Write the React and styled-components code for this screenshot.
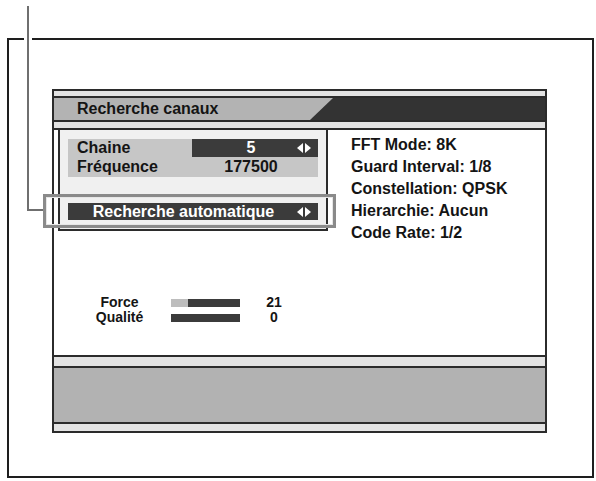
import React from 'react'
import styled, { createGlobalStyle } from 'styled-components'

const GlobalStyle = createGlobalStyle`
    html, body {
        margin: 0;
        padding: 0;
        background: #ffffff;
    }
    body {
        width: 596px;
        height: 481px;
        overflow: hidden;
        font-family: "Liberation Sans", Arial, Helvetica, sans-serif;
        font-weight: bold;
        color: #141414;
    }
`

const Page = styled.div`
    position: relative;
    width: 596px;
    height: 481px;
    padding-top: 38px;
    padding-left: 7px;
    box-sizing: border-box;
`

const Frame = styled.div`
    width: 587px;
    height: 440px;
    box-sizing: border-box;
    border: 2px solid #1e1e1e;
    padding: 49px 0 0 43px;
`

const Panel = styled.div`
    width: 495px;
    height: 344px;
    box-sizing: border-box;
    border: 2px solid #2b2b2b;
    display: flex;
    flex-direction: column;
`

const Strip = styled.div`
    height: ${p => p.h}px;
    flex: none;
    background: ${p => p.bg || '#e3e3e3'};
    border-top: ${p => (p.lineTop ? '2px solid #2b2b2b' : 'none')};
    border-bottom: ${p => (p.line ? '2px solid #2b2b2b' : 'none')};
`

const TitleBar = styled.div`
    height: 22px;
    flex: none;
    display: flex;
    align-items: center;
    background: #b3b3b3;
    border-bottom: 2px solid #2b2b2b;
`

const Title = styled.span`
    padding-left: 23px;
    font-size: 16px;
    line-height: 22px;
`

const DarkTab = styled.div`
    margin-left: auto;
    width: 235px;
    height: 100%;
    background: #333333;
    clip-path: polygon(23px 0, 100% 0, 100% 100%, 0 100%);
`

const Content = styled.div`
    flex: 1;
    background: #ffffff;
`

const Upper = styled.div`
    display: grid;
    grid-template-columns: 270px 1fr;
    align-items: start;
    margin-left: 4px;
`

const LeftBox = styled.div`
    box-sizing: border-box;
    border: 2px solid #2b2b2b;
    border-top: none;
    background: #f0f0f0;
    padding: 9px 8px;
    display: flex;
    flex-direction: column;
`

const Row = styled.div`
    height: ${p => p.h}px;
    display: grid;
    grid-template-columns: 124px 1fr;
    background: #c6c6c6;
    font-size: 16px;
    line-height: ${p => p.h}px;
`

const Label = styled.span`
    padding-left: 9px;
`

const Value = styled.div`
    display: grid;
    grid-template-columns: 1fr 16px;
    align-items: center;
    padding: 0 6px 0 14px;
    background: ${p => (p.active ? '#3b3b3b' : 'transparent')};
    color: ${p => (p.active ? '#ffffff' : '#141414')};
    text-align: center;
`

const AutoWrap = styled.div`
    position: relative;
    margin-top: 26px;
`

const AutoBar = styled.div`
    height: 17px;
    display: grid;
    grid-template-columns: 1fr 16px;
    align-items: center;
    padding: 0 6px 0 3px;
    background: #3b3b3b;
    color: #ffffff;
    font-size: 16px;
    line-height: 17px;
    text-align: center;
`

const Highlight = styled.div`
    position: absolute;
    left: -25px;
    right: -18px;
    top: -9px;
    bottom: -8px;
    border: 3px solid #8a8a8a;
    box-shadow: inset 0 0 0 1px #e6e6e6;
    pointer-events: none;
`

const LeaderDown = styled.div`
    position: absolute;
    left: -41px;
    top: -197px;
    width: 2px;
    height: 205px;
    background: #6f6f6f;
    box-shadow: 0 0 0 3px #ffffff;
`

const LeaderAcross = styled.div`
    position: absolute;
    left: -41px;
    top: 6px;
    width: 16px;
    height: 2px;
    background: #6f6f6f;
`

const Info = styled.div`
    padding: 4px 0 0 23px;
    font-size: 16px;
    line-height: 22px;
`

const Signal = styled.div`
    display: grid;
    grid-template-columns: 75px 69px 40px;
    column-gap: 14px;
    grid-auto-rows: 15px;
    align-items: center;
    margin: 51px 0 0 28px;
    font-size: 14px;
    line-height: 15px;
`

const SignalLabel = styled.span`
    text-align: center;
`

const SignalNum = styled.span`
    text-align: center;
`

const Bar = styled.div`
    height: 8px;
    background: #3b3b3b;
    display: flex;
`

const BarFill = styled.div`
    height: 100%;
    background: #bdbdbd;
`

function Arrows() {
    return (
        <svg width="16" height="10" viewBox="0 0 16 10">
            <polygon points="7,0 7,10 1,5" fill="#ffffff" />
            <polygon points="9,0 15,5 9,10" fill="#ffffff" />
        </svg>
    )
}

const info = [
    'FFT Mode: 8K',
    'Guard Interval: 1/8',
    'Constellation: QPSK',
    'Hierarchie: Aucun',
    'Code Rate: 1/2'
]

const signal = [
    { label: 'Force', value: 21, fill: 25 },
    { label: 'Qualité', value: 0, fill: 0 }
]

function App() {
    return (
        <Page>
            <GlobalStyle />
            <Frame>
                <Panel>
                    <Strip h={5} line />
                    <TitleBar>
                        <Title>Recherche canaux</Title>
                        <DarkTab />
                    </TitleBar>
                    <Strip h={6} line />
                    <Content>
                        <Upper>
                            <LeftBox>
                                <Row h={18}>
                                    <Label>Chaine</Label>
                                    <Value active>
                                        <span>5</span>
                                        <Arrows />
                                    </Value>
                                </Row>
                                <Row h={20}>
                                    <Label>Fréquence</Label>
                                    <Value>
                                        <span>177500</span>
                                        <span />
                                    </Value>
                                </Row>
                                <AutoWrap>
                                    <AutoBar>
                                        <span>Recherche automatique</span>
                                        <Arrows />
                                    </AutoBar>
                                    <Highlight />
                                    <LeaderDown />
                                    <LeaderAcross />
                                </AutoWrap>
                            </LeftBox>
                            <Info>
                                {info.map(line => (
                                    <div key={line}>{line}</div>
                                ))}
                            </Info>
                        </Upper>
                        <Signal>
                            {signal.map(s => (
                                <React.Fragment key={s.label}>
                                    <SignalLabel>{s.label}</SignalLabel>
                                    <Bar>
                                        <BarFill style={{ width: `${s.fill}%` }} />
                                    </Bar>
                                    <SignalNum>{s.value}</SignalNum>
                                </React.Fragment>
                            ))}
                        </Signal>
                    </Content>
                    <Strip h={9} line lineTop />
                    <Strip h={54} line bg="#b2b2b2" />
                    <Strip h={7} />
                </Panel>
            </Frame>
        </Page>
    )
}

export default App
